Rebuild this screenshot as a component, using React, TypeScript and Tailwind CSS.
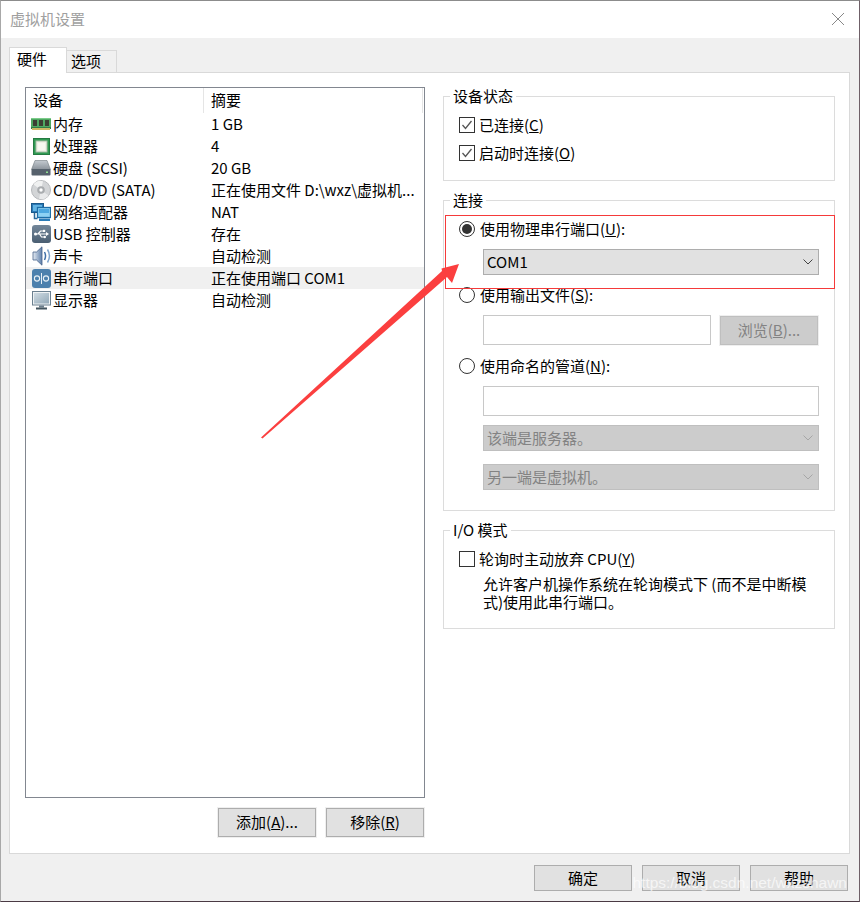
import React from "react";

const font = "font-['Noto_Sans_CJK_SC','Liberation_Sans',sans-serif]";

function Ico({ k }: { k: string }) {
  if (k === "ram")
    return (
      <svg width="20" height="12" viewBox="0 0 20 12">
        <rect x="0" y="0" width="20" height="9" fill="#4fa862" />
        <rect x="0" y="0" width="20" height="1" fill="#7ccb8a" />
        <rect x="2" y="2" width="4" height="6" fill="#3b3f33" />
        <rect x="8" y="2" width="4" height="6" fill="#3b3f33" />
        <rect x="14" y="2" width="4" height="6" fill="#3b3f33" />
        <rect x="0" y="9" width="20" height="2" fill="#2f7e47" />
        <rect x="1" y="10" width="18" height="2" fill="#cdb765" />
      </svg>
    );
  if (k === "cpu")
    return (
      <svg width="17" height="17" viewBox="0 0 17 17">
        <rect x="0.5" y="0.5" width="16" height="16" fill="#2f9a52" stroke="#257a41" />
        <rect x="3" y="3" width="11" height="11" fill="#eef1e6" stroke="#a9bba6" />
        <rect x="5" y="5" width="7" height="7" fill="#f7f8f1" />
      </svg>
    );
  if (k === "hdd")
    return (
      <svg width="20" height="16" viewBox="0 0 20 16">
        <defs>
          <linearGradient id="hddTop" x1="0" y1="0" x2="0" y2="1">
            <stop offset="0" stopColor="#c4cad0" />
            <stop offset="1" stopColor="#8b939b" />
          </linearGradient>
        </defs>
        <path d="M4 0.500h12l3.500 9H0.500z" fill="url(#hddTop)" stroke="#70787f" strokeWidth="0.600" />
        <rect x="0.500" y="9" width="19" height="6.500" rx="1" fill="#56616c" />
        <rect x="15" y="11.500" width="2" height="1.500" fill="#8fe08f" />
      </svg>
    );
  if (k === "cd")
    return (
      <svg width="20" height="20" viewBox="0 0 20 20">
        <circle cx="10" cy="10" r="9.500" fill="#d3d5d7" stroke="#b6b8bb" />
        <path d="M10 10 2.500 4.500A9 9 0 0 1 12 1.200z" fill="#f0f1f1" />
        <path d="M10 10 17.500 15.500A9 9 0 0 1 8 18.800z" fill="#e9eaeb" />
        <circle cx="10" cy="10" r="3.800" fill="#a9acaf" />
        <circle cx="10" cy="10" r="1.700" fill="#fff" />
      </svg>
    );
  if (k === "net")
    return (
      <svg width="20" height="18" viewBox="0 0 20 18">
        <rect x="0.500" y="0.500" width="12" height="9" fill="#2b78b5" stroke="#1a5a8c" />
        <rect x="2" y="2" width="9" height="6" fill="#63b4e3" />
        <path d="M3.500 10v5.500h3" stroke="#2a6a9b" strokeWidth="1.500" fill="none" />
        <rect x="6.500" y="4.500" width="13" height="10" fill="#8ed2f4" stroke="#1d6ea8" strokeWidth="1.300" />
        <rect x="8" y="6" width="10" height="4" fill="#4da8e0" />
        <rect x="8" y="15.500" width="11" height="2.500" fill="#2a7cb8" />
      </svg>
    );
  if (k === "usb")
    return (
      <svg width="19" height="18" viewBox="0 0 19 18">
        <defs>
          <linearGradient id="usbBg" x1="0" y1="0" x2="0" y2="1">
            <stop offset="0" stopColor="#73879a" />
            <stop offset="1" stopColor="#4a5e72" />
          </linearGradient>
        </defs>
        <rect width="19" height="18" rx="3" fill="url(#usbBg)" />
        <circle cx="3.500" cy="9" r="1.500" fill="#fff" />
        <path d="M3 9h11.500M6 9l2.500-3h3M7.500 9l2 3h2.500" stroke="#fff" strokeWidth="1.200" fill="none" />
        <path d="M14 7 17 9l-3 2z" fill="#fff" />
        <rect x="11" y="4.800" width="2.200" height="2.200" fill="#fff" />
        <circle cx="12.800" cy="12" r="1.200" fill="#fff" />
      </svg>
    );
  if (k === "snd")
    return (
      <svg width="19" height="20" viewBox="0 0 19 20">
        <defs>
          <linearGradient id="sndBg" x1="0" y1="0" x2="1" y2="0">
            <stop offset="0" stopColor="#e6ecf3" />
            <stop offset="1" stopColor="#5d7fab" />
          </linearGradient>
        </defs>
        <path d="M1 6h3.500L10 0.800v18.400L4.500 14H1z" fill="url(#sndBg)" stroke="#47628a" strokeWidth="0.800" />
        <path d="M12.500 6c1.300 2.500 1.300 5.500 0 8" stroke="#3f6fa8" strokeWidth="1.500" fill="none" />
        <path d="M15.500 3.500c2.400 4 2.400 9 0 13" stroke="#7ea3cc" strokeWidth="1.500" fill="none" />
      </svg>
    );
  if (k === "ser")
    return (
      <svg width="19" height="19" viewBox="0 0 19 19">
        <rect width="19" height="19" rx="3" fill="#4c80ad" />
        <circle cx="5" cy="9.500" r="2.600" fill="none" stroke="#e8f0f6" strokeWidth="1.100" />
        <rect x="9" y="4" width="1" height="11" fill="#e8f0f6" />
        <circle cx="14" cy="9.500" r="2.600" fill="none" stroke="#e8f0f6" strokeWidth="1.100" />
      </svg>
    );
  return (
    <svg width="19" height="19" viewBox="0 0 19 19">
      <defs>
        <linearGradient id="monBg" x1="0" y1="0" x2="1" y2="1">
          <stop offset="0" stopColor="#cfdbe3" />
          <stop offset="1" stopColor="#93a9b8" />
        </linearGradient>
      </defs>
      <rect x="0.500" y="0.500" width="18" height="13.500" fill="#eef2f4" stroke="#6b8090" />
      <rect x="2" y="2" width="15" height="10.500" fill="url(#monBg)" />
      <rect x="7" y="14.500" width="5" height="2" fill="#6d7f8d" />
      <rect x="4" y="16.500" width="11" height="2" fill="#43545f" />
    </svg>
  );
}

const rows = [
  ["ram", "内存", "1 GB"],
  ["cpu", "处理器", "4"],
  ["hdd", "硬盘 (SCSI)", "20 GB"],
  ["cd", "CD/DVD (SATA)", "正在使用文件 D:\\wxz\\虚拟机..."],
  ["net", "网络适配器", "NAT"],
  ["usb", "USB 控制器", "存在"],
  ["snd", "声卡", "自动检测"],
  ["ser", "串行端口", "正在使用端口 COM1"],
  ["mon", "显示器", "自动检测"],
];

function Btn({ children, h = "h-[26px]", ring }: { children: React.ReactNode; h?: string; ring?: boolean }) {
  return (
    <div
      className={`w-[98px] ${h} flex items-center justify-center bg-[#e1e1e1] border border-[#adadad] text-[15px] text-black ${
        ring ? "shadow-[0_0_0_1px_#efefef]" : ""
      }`}
    >
      {children}
    </div>
  );
}

function Group({ title, h, children }: { title: string; h: string; children: React.ReactNode }) {
  return (
    <div className={`relative ${h} border border-[#dcdcdc] w-[392px]`}>
      <div className="absolute -top-[11px] left-[6px] bg-white px-[3px] text-[15px] leading-[20px] text-black">{title}</div>
      {children}
    </div>
  );
}

function Check({ on, label }: { on?: boolean; label: React.ReactNode }) {
  return (
    <div className="flex items-center gap-[4px] text-[15px] leading-[20px]">
      <div className="w-[16px] h-[16px] border border-[#333] flex items-center justify-center bg-white">
        {on && (
          <svg width="12" height="12" viewBox="0 0 12 12">
            <path d="M1.500 6 4.500 9.500 10.500 2" stroke="#555" strokeWidth="1.300" fill="none" />
          </svg>
        )}
      </div>
      <span>{label}</span>
    </div>
  );
}

function Radio({ on, label }: { on?: boolean; label: React.ReactNode }) {
  return (
    <div className="flex items-center gap-[5px] text-[15px] leading-[20px]">
      <div className="w-[16px] h-[16px] rounded-full border border-[#333] flex items-center justify-center bg-white">
        {on && <div className="w-[10px] h-[10px] rounded-full bg-[#333]" />}
      </div>
      <span>{label}</span>
    </div>
  );
}

function Chevron({ color }: { color: string }) {
  return (
    <svg width="10" height="6" viewBox="0 0 10 6">
      <path d="M.5.500 5 5 9.500.500" stroke={color} fill="none" />
    </svg>
  );
}

function Combo({ text, disabled }: { text: string; disabled?: boolean }) {
  return (
    <div
      className={`w-[336px] h-[26px] flex items-center justify-between pl-[3px] pr-[5px] text-[15px] border ${
        disabled ? "bg-[#cccccc] border-[#bfbfbf] text-[#838383]" : "bg-[#e1e1e1] border-[#adadad] text-black"
      }`}
    >
      <span>{text}</span>
      <Chevron color={disabled ? "#a6a6a6" : "#444"} />
    </div>
  );
}

export default function App() {
  return (
    <div className={`relative w-[860px] h-[902px] bg-[#f0f0f0] overflow-hidden ${font} text-black`}>
      <div className="h-[38px] bg-white flex items-center justify-between pl-[10px] pr-[16px] text-[15px] text-[#a0a0a0]">
        <span>虚拟机设置</span>
        <svg width="12" height="12" viewBox="0 0 12 12">
          <path d="M0 0l12 12M12 0 0 12" stroke="#888" strokeWidth="1" fill="none" />
        </svg>
      </div>
      <div className="pl-[9px] pr-[10px] pt-[9px]">
        <div className="flex items-end h-[26px]">
          <div className="relative z-10 w-[58px] h-[26px] bg-white border border-b-0 border-[#d9d9d9] text-[15px] flex items-center pl-[7px] pb-[3px]">硬件</div>
          <div className="w-[50px] h-[23px] bg-[#f0f0f0] border border-l-0 border-[#d9d9d9] text-[15px] flex items-center pl-[4px]">选项</div>
        </div>
        <div className="-mt-px h-[782px] bg-white border border-[#d9d9d9] pl-[15px] pt-[14px] flex gap-[18px]">
          <div className="flex flex-col w-[400px]">
            <div className="h-[711px] border border-[#828790] text-[15px]">
              <div className="flex h-[25px] items-center">
                <div className="w-[178px] pl-[7px] border-r border-[#e5e5e5] h-full flex items-center">设备</div>
                <div className="flex-1 mr-px pl-[7px] border-r border-[#e5e5e5] h-full flex items-center">摘要</div>
              </div>
              {rows.map(([k, a, b]) => (
                <div key={a} className={`flex h-[22px] items-center ${a === "串行端口" ? "bg-[#f0f0f0]" : ""}`}>
                  <div className="w-[27px] shrink-0 flex items-center justify-center pl-[3px]"><Ico k={k} /></div>
                  <div className="w-[158px] shrink-0">{a}</div>
                  <div className="whitespace-nowrap">{b}</div>
                </div>
              ))}
            </div>
            <div className="flex justify-end gap-[10px] mt-[10px] mr-px">
              <Btn h="h-[29px]" ring>添加(<u>A</u>)...</Btn>
              <Btn h="h-[29px]" ring>移除(<u>R</u>)</Btn>
            </div>
          </div>
          <div className="flex flex-col pt-[9px]">
            <Group title="设备状态" h="h-[85px]">
              <div className="pt-[18px] pl-[15px] flex flex-col gap-[8px]">
                <Check on label={<>已连接(<u>C</u>)</>} />
                <Check on label={<>启动时连接(<u>O</u>)</>} />
              </div>
            </Group>
            <div className="h-[19px]" />
            <Group title="连接" h="h-[311px]">
              <div className="pt-[18px] pl-[15px] flex flex-col">
                <Radio on label={<>使用物理串行端口(<u>U</u>):</>} />
                <div className="pl-[24px] mt-[10px]"><Combo text="COM1" /></div>
                <div className="mt-[10px]"><Radio label={<>使用输出文件(<u>S</u>):</>} /></div>
                <div className="pl-[24px] mt-[10px] flex gap-[9px]">
                  <div className="w-[228px] h-[30px] border border-[#c8c8c8] bg-white" />
                  <div className="w-[98px] h-[29px] mt-px bg-[#cccccc] border border-[#bfbfbf] text-[#838383] text-[15px] flex items-center justify-center shadow-[0_0_0_1px_#efefef]">浏览(<u>B</u>)...</div>
                </div>
                <div className="mt-[11px]"><Radio label={<>使用命名的管道(<u>N</u>):</>} /></div>
                <div className="pl-[24px] mt-[10px] flex flex-col">
                  <div className="w-[336px] h-[30px] border border-[#c8c8c8] bg-white" />
                  <div className="mt-[9px]"><Combo text="该端是服务器。" disabled /></div>
                  <div className="mt-[13px]"><Combo text="另一端是虚拟机。" disabled /></div>
                </div>
              </div>
            </Group>
            <div className="h-[19px]" />
            <Group title="I/O 模式" h="h-[99px]">
              <div className="pt-[18px] pl-[15px]">
                <Check label={<>轮询时主动放弃 CPU(<u>Y</u>)</>} />
                <div className="pl-[24px] pt-[6px] text-[15px] leading-[18px] whitespace-nowrap">
                  允许客户机操作系统在轮询模式下 (而不是中断模
                  <br />
                  式)使用此串行端口。
                </div>
              </div>
            </Group>
          </div>
        </div>
        <div className="flex justify-end gap-[10px] mt-[11px] pr-[2px]">
          <Btn>确定</Btn>
          <Btn>取消</Btn>
          <Btn>帮助</Btn>
        </div>
      </div>

      <div className="absolute left-[445px] top-[215px] w-[390px] h-[74px] border border-[#f53a3a]" />
      <svg className="absolute left-0 top-0 pointer-events-none" width="860" height="902" viewBox="0 0 860 902">
        <path d="M261 437.500 442 271 441.500 268.500 459 264 452 283 447 277 262.500 438.500Z" fill="#fb3f3f" />
      </svg>
      <div className="absolute right-[13px] bottom-[9px] text-[15.5px] leading-[20px] text-white/70 font-['Liberation_Sans',sans-serif]">https://blog.csdn.net/wxzshawn</div>
      <div className="absolute inset-0 pointer-events-none border-t border-l border-r border-b border-t-[#8c8c8c] border-l-[#a8a8a8] border-r-[#6f6068] border-b-[#4a3a44]" />
    </div>
  );
}
